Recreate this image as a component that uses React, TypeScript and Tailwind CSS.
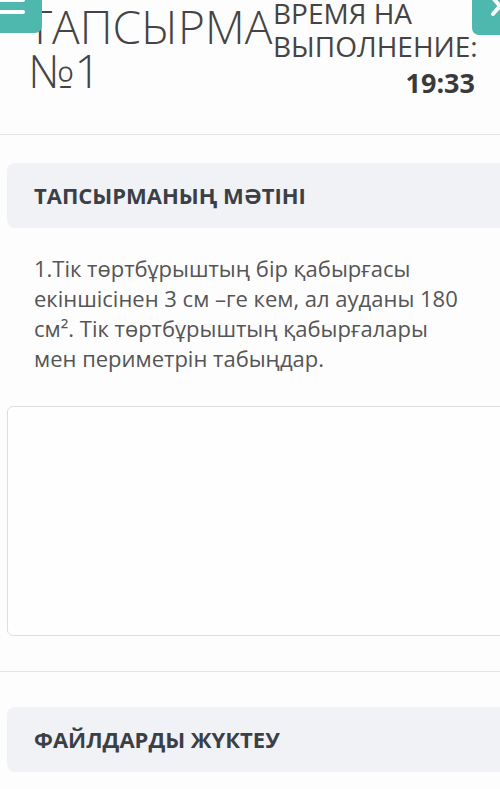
import React from 'react'

const font = { fontFamily: '"Open Sans", "Noto Sans", sans-serif' }

export default function App() {
  return (
    <div className="relative w-[500px] h-[789px] overflow-hidden bg-[#fdfdfd]" style={font}>
      {/* top overlay buttons */}
      <div className="absolute left-0 top-0 w-[42px] h-[33px] bg-[#4fb8ae] rounded-br-[7px] z-10">
        <div className="absolute left-0 top-[-2px] w-[25px] h-[4px] bg-white rounded-r-[2px]" />
        <div className="absolute left-0 top-[10px] w-[25px] h-[4px] bg-white rounded-r-[2px]" />
      </div>
      <div className="absolute right-0 top-0 w-[28px] h-[35px] bg-[#4fb8ae] rounded-bl-[7px] z-10 overflow-hidden">
        <svg className="absolute left-[19px] top-[-4px]" width="20" height="22" viewBox="0 0 20 22">
          <path d="M2 2 L16 18 M16 2 L2 18" stroke="white" strokeWidth="4" strokeLinecap="round" />
        </svg>
      </div>

      {/* header */}
      <div className="flex h-[135px] border-b border-[#e4e4e4]">
        <div className="flex-1 pl-[28px] pt-[4px] text-[46px] leading-[44px] font-light text-[#444]">
          ТАПСЫРМА №1
        </div>
        <div className="w-[227px] shrink-0 pr-[25px] -mt-[3px] text-[28px] leading-[33px] text-[#444]">
          <div>ВРЕМЯ НА ВЫПОЛНЕНИЕ:</div>
          <div className="mt-[3px] text-right text-[27px] font-bold text-[#3a3a3a]">19:33</div>
        </div>
      </div>

      {/* task text */}
      <div className="pl-[7px] pb-[35px] border-b border-[#e4e4e4]">
        <div className="mt-[28px] -mr-[12px] h-[65px] flex items-center px-[27px] bg-[#f1f2f6] rounded-[8px]">
          <h2 className="text-[22px] font-bold text-[#3b3f46]">ТАПСЫРМАНЫҢ МӘТІНІ</h2>
        </div>
        <p className="mt-[25px] pl-[27px] w-[460px] text-[22px] leading-[30px] text-[#555]">
          1.Тік төртбұрыштың бір қабырғасы екіншісінен 3 см –ге кем, ал ауданы 180 см². Тік төртбұрыштың қабырғалары мен периметрін табыңдар.
        </p>
        <div className="mt-[33px] -mr-[12px] h-[230px] border border-[#dedede] rounded-[6px] bg-[#fefefe]" />
      </div>

      {/* files */}
      <div className="pl-[7px]">
        <div className="mt-[35px] -mr-[12px] h-[65px] flex items-center px-[27px] bg-[#f1f2f6] rounded-[8px]">
          <h2 className="text-[22px] font-bold text-[#3b3f46]">ФАЙЛДАРДЫ ЖҮКТЕУ</h2>
        </div>
      </div>
    </div>
  )
}
